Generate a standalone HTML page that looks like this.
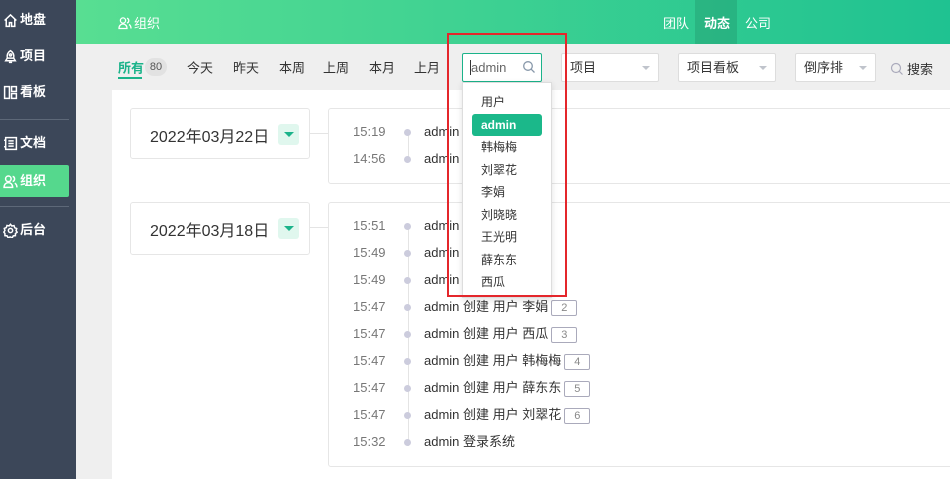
<!DOCTYPE html>
<html><head><meta charset="utf-8"><style>
*{margin:0;padding:0;box-sizing:border-box}
body{width:950px;height:479px;overflow:hidden;background:#efefef;font-family:"Liberation Sans","Noto Sans CJK SC",sans-serif;font-size:13px;color:#333;position:relative}
.abs{position:absolute}
.side{left:0;top:0;width:76px;height:479px;background:#3c4759}
.si{position:absolute;left:3px;color:#fff;font-size:13px;font-weight:bold;height:20px;line-height:20px;display:flex;align-items:center;gap:2px}
.si svg{width:15px;height:15px}
.sep{position:absolute;left:0;width:69px;height:1px;background:#5d6878}
.head{left:76px;top:0;width:874px;height:44px;background:linear-gradient(90deg,#58de92,#1fc291)}
.tab{top:67px;font-size:13px;color:#333;transform:translateY(-50%)}
.sel{top:53px;height:29px;background:#fff;border:1px solid #ddd;border-radius:2px;padding-left:8px;line-height:27px;font-size:13px;color:#333}
.sel i{position:absolute;right:8px;top:12px;border:4px solid transparent;border-top:4px solid #c0c4cc}
.card{background:#fff;border:1px solid #e6e6e6;border-radius:3px}
.date{font-size:16px;color:#333;position:absolute;left:19px;top:14px}
.tri{position:absolute;left:147px;top:15px;width:21px;height:21px;background:#e0f7ee;border-radius:3px}
.tri:after{content:"";position:absolute;left:6px;top:8px;border:5px solid transparent;border-top:5px solid #1bb38a}
.row{position:absolute;left:353px;font-size:13px;height:16px;line-height:16px}
.row .t{position:absolute;left:0;color:#777;}
.row .d{position:absolute;left:51px;top:5px;width:7px;height:7px;border-radius:50%;background:#ccd}
.row .x{position:absolute;left:71px;white-space:nowrap;color:#333}
.num{display:inline-block;border:1px solid #aab;border-radius:2px;font-size:11px;color:#888;width:26px;height:16px;line-height:14px;text-align:center;margin-left:3px;vertical-align:0}
.vl{position:absolute;left:408px;width:1px;background:#e4e4e4}
.dd div{height:22.5px;line-height:22px;padding-left:18px;font-size:12px;color:#333}
</style></head><body>
<div class="abs side">
 <div class="si" style="top:10px"><svg viewBox="0 0 14 14" fill="none" stroke="#fff" stroke-width="1.4"><path d="M1.5 7 7 1.8 12.5 7M3 5.8V12.5h3V9h2v3.5h3V5.8"/></svg>地盘</div>
 <div class="si" style="top:46px"><svg viewBox="0 0 14 14" fill="none" stroke="#fff" stroke-width="1.4"><path d="M7 1.5c2.5 1.5 3.5 4 3 7H4c-.5-3 .5-5.5 3-7zM4 8.5 2.5 11h9L10 8.5M5.5 12.5h3"/><circle cx="7" cy="5.5" r="1"/></svg>项目</div>
 <div class="si" style="top:82px"><svg viewBox="0 0 14 14" fill="none" stroke="#fff" stroke-width="1.4"><rect x="1.5" y="1.5" width="4.5" height="11"/><rect x="8" y="1.5" width="4.5" height="4.5"/><rect x="8" y="8" width="4.5" height="4.5"/></svg>看板</div>
 <div class="sep" style="top:119px"></div>
 <div class="si" style="top:133px"><svg viewBox="0 0 14 14" fill="none" stroke="#fff" stroke-width="1.4"><rect x="2.5" y="1.5" width="10" height="11"/><path d="M5 4.5h5M5 7h5M5 9.5h5M1 4h2M1 10h2"/></svg>文档</div>
 <div class="abs" style="left:0;top:165px;width:69px;height:32px;background:#55d88d;border-radius:0 2px 2px 0"></div>
 <div class="si" style="top:171px"><svg viewBox="0 0 14 14" fill="none" stroke="#fff" stroke-width="1.4"><circle cx="5" cy="4.5" r="2.6"/><path d="M1 12.5c0-3 2-4.5 4-4.5s4 1.5 4 4.5zM9 2.2a2.5 2.5 0 0 1 0 4.8M11 8.5c1.3.7 2 2 2 4"/></svg>组织</div>
 <div class="sep" style="top:206px"></div>
 <div class="si" style="top:220px"><svg viewBox="0 0 14 14" fill="none" stroke="#fff" stroke-width="1.4"><circle cx="7" cy="7" r="2"/><path d="M7 1.2 8.3 2.8l2-.4.6 2 1.9.8-.6 1.9 1 1.5-1.6 1.2v2l-2 .2-1 1.8-1.9-.8-1.9.8-1-1.8-2-.2v-2L.8 8.5l1-1.5-.6-1.9 1.9-.8.6-2 2 .4z"/></svg>后台</div>
</div>
<div class="abs head">
 <div class="abs" style="left:42px;top:13px;color:#fff;font-size:13px;display:flex;align-items:center;gap:2px"><svg width="14" height="14" viewBox="0 0 14 14" fill="none" stroke="#fff" stroke-width="1.3"><circle cx="5" cy="4.5" r="2.6"/><path d="M1 12.5c0-3 2-4.5 4-4.5s4 1.5 4 4.5zM9 2.2a2.5 2.5 0 0 1 0 4.8M11 8.5c1.3.7 2 2 2 4"/></svg>组织</div>
 <div class="abs" style="left:587px;top:13px;color:#fff;font-size:13px">团队</div>
 <div class="abs" style="left:619px;top:0;width:42px;height:44px;background:rgba(0,0,0,.1)"></div>
 <div class="abs" style="left:628px;top:13px;color:#fff;font-size:13px;font-weight:bold">动态</div>
 <div class="abs" style="left:669px;top:13px;color:#fff;font-size:13px">公司</div>
</div>
<div class="abs tab" style="left:118px;color:#1bb38a;font-weight:bold">所有</div>
<div class="abs" style="left:118px;top:77px;width:24px;height:2px;background:#1bb38a"></div>
<div class="abs" style="left:145px;top:58px;width:22px;height:18px;border-radius:9px;background:#e2e2e2;font-size:11px;color:#555;text-align:center;line-height:18px">80</div>
<div class="abs tab" style="left:187px">今天</div>
<div class="abs tab" style="left:233px">昨天</div>
<div class="abs tab" style="left:279px">本周</div>
<div class="abs tab" style="left:323px">上周</div>
<div class="abs tab" style="left:369px">本月</div>
<div class="abs tab" style="left:414px">上月</div>
<div class="abs sel" style="left:462px;width:80px;border-color:#1bb38a;color:#666;padding-left:7px"><span style="border-left:1px solid #333">admin</span>
 <svg class="abs" style="right:5px;top:6px" width="14" height="14" viewBox="0 0 14 14" fill="none" stroke="#8898aa" stroke-width="1.3"><circle cx="6" cy="6" r="4.3"/><path d="M9.2 9.2 12.5 12.5"/></svg></div>
<div class="abs sel" style="left:561px;width:98px">项目<i></i></div>
<div class="abs sel" style="left:678px;width:98px">项目看板<i></i></div>
<div class="abs sel" style="left:795px;width:81px">倒序排<i></i></div>
<div class="abs" style="left:890px;top:59px;display:flex;align-items:center;gap:3px;font-size:13px"><svg width="14" height="14" viewBox="0 0 14 14" fill="none" stroke="#aab" stroke-width="1.2"><circle cx="6" cy="6" r="4.5"/><path d="M9.3 9.3 12.5 12.5"/></svg>搜索</div>
<div class="abs" style="left:112px;top:90px;width:838px;height:389px;background:#fff"></div>
<div class="abs card" style="left:130px;top:108px;width:180px;height:51px"><div class="date">2022年03月22日</div><div class="tri"></div></div>
<div class="abs" style="left:310px;top:133px;width:18px;height:1px;background:#e4e4e4"></div>
<div class="abs card" style="left:328px;top:108px;width:630px;height:76px"></div>
<div class="abs card" style="left:130px;top:202px;width:180px;height:53px"><div class="date">2022年03月18日</div><div class="tri"></div></div>
<div class="abs" style="left:310px;top:227px;width:18px;height:1px;background:#e4e4e4"></div>
<div class="abs card" style="left:328px;top:202px;width:630px;height:265px"></div>
<div class="vl" style="top:132px;height:28px"></div>
<div class="vl" style="top:226px;height:220px"></div>
<div class="row" style="top:124px"><span class="t">15:19</span><span class="d"></span><span class="x">admin 退出系统</span></div>
<div class="row" style="top:151px"><span class="t">14:56</span><span class="d"></span><span class="x">admin 登录系统</span></div>
<div class="row" style="top:218px"><span class="t">15:51</span><span class="d"></span><span class="x">admin 退出系统</span></div>
<div class="row" style="top:245px"><span class="t">15:49</span><span class="d"></span><span class="x">admin 登录系统</span></div>
<div class="row" style="top:272px"><span class="t">15:49</span><span class="d"></span><span class="x">admin 退出系统</span></div>
<div class="row" style="top:299px"><span class="t">15:47</span><span class="d"></span><span class="x">admin 创建 用户 李娟<span class="num">2</span></span></div>
<div class="row" style="top:326px"><span class="t">15:47</span><span class="d"></span><span class="x">admin 创建 用户 西瓜<span class="num">3</span></span></div>
<div class="row" style="top:353px"><span class="t">15:47</span><span class="d"></span><span class="x">admin 创建 用户 韩梅梅<span class="num">4</span></span></div>
<div class="row" style="top:380px"><span class="t">15:47</span><span class="d"></span><span class="x">admin 创建 用户 薛东东<span class="num">5</span></span></div>
<div class="row" style="top:407px"><span class="t">15:47</span><span class="d"></span><span class="x">admin 创建 用户 刘翠花<span class="num">6</span></span></div>
<div class="row" style="top:434px"><span class="t">15:32</span><span class="d"></span><span class="x">admin 登录系统</span></div>
<div class="abs dd" style="left:462px;top:82px;width:90px;height:216px;background:#fff;border:1px solid #ddd;box-shadow:0 2px 6px rgba(0,0,0,.12);padding-top:8px">
 <div>用户</div>
 <div style="background:#1bb88a;color:#fff;font-weight:bold;margin:0 9px;padding-left:9px;border-radius:3px">admin</div>
 <div>韩梅梅</div><div>刘翠花</div><div>李娟</div><div>刘晓晓</div><div>王光明</div><div>薛东东</div><div>西瓜</div>
</div>
<div class="abs" style="left:447px;top:33px;width:120px;height:264px;border:2px solid #e4262b"></div>
</body></html>
